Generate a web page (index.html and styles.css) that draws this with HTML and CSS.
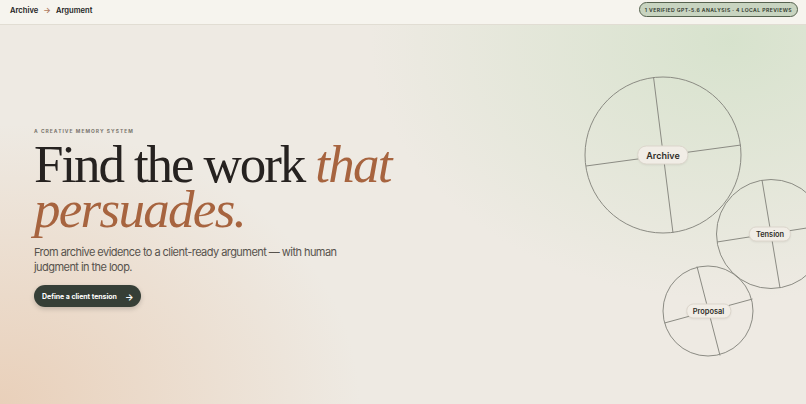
FILE: index.html
```html
<!DOCTYPE html>
<html lang="en">
<head>
    <meta charset="UTF-8">
    <meta name="viewport" content="width=device-width, initial-scale=1.0">
    <title>Archive → Argument</title>
    <link rel="stylesheet" href="styles.css">
</head>
<body>
    <header class="topbar">
        <div class="crumbs">
            <span>Archive</span>
            <span class="crumb-arrow">→</span>
            <span>Argument</span>
        </div>
        <div class="status-pill">1 verified GPT-5.6 analysis · 4 local previews</div>
    </header>

    <main class="stage">
        <section class="hero">
            <p class="eyebrow">A creative memory system</p>
            <h1 class="headline">Find the work <em>that persuades.</em></h1>
            <p class="lede">From archive evidence to a client-ready argument — with human judgment in the loop.</p>
            <button class="cta">Define a client tension <span class="cta-arrow">→</span></button>
        </section>

        <!-- memory map -->
        <div class="diagram">
            <svg width="806" height="404" viewBox="0 0 806 404">
                <g fill="none" stroke="#8b8b83" stroke-width="1">
                    <circle cx="663" cy="155" r="78" />
                    <line x1="653.5" y1="77" x2="673" y2="233" />
                    <line x1="586" y1="166" x2="741" y2="145" />

                    <circle cx="771" cy="234" r="54.5" />
                    <line x1="762" y1="180" x2="780" y2="288" />
                    <line x1="717" y1="242" x2="826" y2="225" />

                    <circle cx="708" cy="311" r="45" />
                    <line x1="697" y1="266.5" x2="720" y2="355.5" />
                    <line x1="664.5" y1="323" x2="752.5" y2="299" />
                </g>
            </svg>
            <div class="node node-lg" style="left: 663px; top: 155px;">Archive</div>
            <div class="node" style="left: 770px; top: 233.5px;">Tension</div>
            <div class="node" style="left: 708.5px; top: 311px;">Proposal</div>
        </div>
    </main>
</body>
</html>
```

FILE: styles.css
```css
html, body {
    margin: 0;
    padding: 0;
}

body {
    width: 806px;
    height: 404px;
    overflow: hidden;
    font-family: Inter, "Liberation Sans", sans-serif;
    color: #2a2824;
    background-color: #eeeae3;
    background-image:
        radial-gradient(ellipse 360px 260px at 730px 40px, rgba(214, 226, 204, 0.95), rgba(214, 226, 204, 0) 100%),
        radial-gradient(ellipse 360px 280px at 0px 404px, rgba(233, 208, 186, 1), rgba(233, 208, 186, 0) 100%);
    display: flex;
    flex-direction: column;
}

.topbar {
    height: 25px;
    box-sizing: border-box;
    flex-shrink: 0;
    display: flex;
    align-items: center;
    justify-content: space-between;
    padding: 0 8px 0 10px;
    background: #f6f4ee;
    border-bottom: 1px solid #e1ddd3;
}

.crumbs {
    display: flex;
    align-items: center;
    gap: 5px;
    font-size: 7.6px;
    font-weight: 600;
    color: #222;
    margin-top: -4px;
}

.crumb-arrow {
    color: #b07a60;
    font-size: 8px;
}

.status-pill {
    height: 15px;
    box-sizing: border-box;
    display: flex;
    align-items: center;
    padding: 0 5px;
    margin-top: -5px;
    background: #c8d4c0;
    border: 1px solid #56624f;
    border-radius: 8px;
    font-size: 5.1px;
    font-weight: 600;
    letter-spacing: 0.42px;
    text-transform: uppercase;
    color: #2c3329;
}

.stage {
    position: relative;
    flex: 1;
}

.hero {
    padding: 103px 0 0 34px;
    width: 380px;
    position: relative;
    z-index: 1;
}

.eyebrow {
    margin: 0 0 8px;
    font-size: 4.9px;
    font-weight: 700;
    letter-spacing: 1.05px;
    text-transform: uppercase;
    color: #7a756d;
}

.headline {
    margin: 0;
    width: 380px;
    font-family: "Liberation Serif", "DejaVu Serif", serif;
    font-weight: 400;
    font-size: 53px;
    line-height: 45px;
    letter-spacing: -2.1px;
    color: #262220;
}

.headline em {
    color: #a7643f;
    letter-spacing: -1.7px;
}

.lede {
    margin: 13px 0 0;
    width: 320px;
    font-size: 11px;
    line-height: 15px;
    letter-spacing: -0.55px;
    color: #57534d;
}

.cta {
    margin-top: 10px;
    height: 22px;
    padding: 0 8px;
    display: flex;
    align-items: center;
    gap: 8px;
    background: #363f37;
    color: #fff;
    border: none;
    border-radius: 11px;
    font-family: Inter, "Liberation Sans", sans-serif;
    font-size: 7px;
    font-weight: 700;
    letter-spacing: -0.05px;
    box-shadow: 0 2px 5px rgba(0, 0, 0, 0.18);
}

.cta-arrow {
    font-size: 9px;
}

.diagram {
    position: absolute;
    left: 0;
    top: -25px;
    width: 806px;
    height: 404px;
    pointer-events: none;
}

.diagram svg {
    position: absolute;
    left: 0;
    top: 0;
}

.node {
    position: absolute;
    transform: translate(-50%, -50%);
    padding: 2px 6px;
    background: #f1ede6;
    border: 1px solid #dcd6cc;
    border-radius: 7px;
    font-size: 7.4px;
    font-weight: 600;
    color: #2f2d29;
    box-shadow: 0 1px 2px rgba(0, 0, 0, 0.06);
    white-space: nowrap;
}

.node-lg {
    padding: 3px 8px;
    border-radius: 9px;
    font-size: 9px;
}
```
